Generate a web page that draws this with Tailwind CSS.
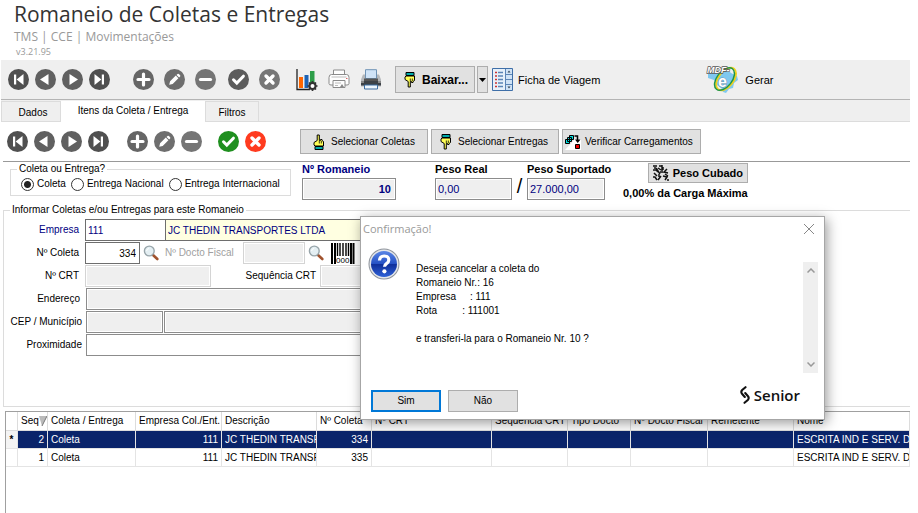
<!DOCTYPE html>
<html lang="pt-BR">
<head>
  <meta charset="UTF-8" />
  <meta name="viewport" content="width=device-width, initial-scale=1.0" />
  <title>Romaneio de Coletas e Entregas</title>
  <script src="https://cdn.jsdelivr.net/npm/@tailwindcss/browser@4"></script>
</head>
<body class="relative min-h-screen flex flex-col overflow-hidden bg-white pr-2 text-[10px] leading-[14px] text-black font-['Liberation_Sans',Arial,sans-serif]">

  <!-- Icon sprites -->
  <svg class="hidden" aria-hidden="true">
    <symbol id="i-first" viewBox="0 0 21 21"><circle cx="10.5" cy="10.5" r="10.5" fill="#505050"/><path d="M6 5.5h2.2v10H6z" fill="#fff"/><path d="M15.5 5v11L8.6 10.5z" fill="#fff"/></symbol>
    <symbol id="i-prev" viewBox="0 0 21 21"><circle cx="10.5" cy="10.5" r="10.5" fill="#606060"/><path d="M13.5 5v11L5 10.5z" fill="#fff"/></symbol>
    <symbol id="i-next" viewBox="0 0 21 21"><circle cx="10.5" cy="10.5" r="10.5" fill="#606060"/><path d="M7.5 5v11l8.5-5.5z" fill="#fff"/></symbol>
    <symbol id="i-last" viewBox="0 0 21 21"><circle cx="10.5" cy="10.5" r="10.5" fill="#505050"/><path d="M12.8 5.5H15v10h-2.2z" fill="#fff"/><path d="M5.5 5v11l6.9-5.5z" fill="#fff"/></symbol>
    <symbol id="i-plus" viewBox="0 0 21 21"><circle cx="10.5" cy="10.5" r="10.5" fill="#666"/><path d="M10.5 5v11M5 10.5h11" stroke="#fff" stroke-width="3.2" stroke-linecap="round"/></symbol>
    <symbol id="i-edit" viewBox="0 0 21 21"><circle cx="10.5" cy="10.5" r="10.5" fill="#6e6e6e"/><path d="M5.2 15.8l.9-3.5 5.7-5.7 2.6 2.6-5.7 5.7zM12.5 5.9l1-1q.7-.5 1.4.1l1.2 1.2q.6.7 0 1.4l-1 1z" fill="#fff"/></symbol>
    <symbol id="i-minus" viewBox="0 0 21 21"><circle cx="10.5" cy="10.5" r="10.5" fill="#757575"/><path d="M5.5 10.5h10" stroke="#fff" stroke-width="3.2" stroke-linecap="round"/></symbol>
    <symbol id="i-check" viewBox="0 0 21 21"><circle cx="10.5" cy="10.5" r="10.5"/><path d="M5.5 10.8l3.3 3.3 6.6-6.9" stroke="#fff" stroke-width="3" fill="none" stroke-linecap="round"/></symbol>
    <symbol id="i-cancel" viewBox="0 0 21 21"><circle cx="10.5" cy="10.5" r="10.5"/><path d="M7 7l7 7M14 7l-7 7" stroke="#fff" stroke-width="3.4" stroke-linecap="round"/></symbol>
    <symbol id="i-hand-down" viewBox="0 0 12 16"><path d="M2 .5h8v3H2z" fill="#0aa" stroke="#000"/><path d="M2 4h8.5v4.5l-1.5 1v1H7.5v-1H6.3V15H4.2V9.5L1 7.5V5z" fill="#ff5" stroke="#000"/><path d="M6.3 9V6.5M8.3 9V6.5" stroke="#000" stroke-width=".8"/></symbol>
    <symbol id="i-hand-up" viewBox="0 0 12 16"><path d="M2 12.5h8v3H2z" fill="#0aa" stroke="#000"/><path d="M2 12h8.5V7.5L9 6.5v-1H7.5v1H6.3V1H4.2v5.5L1 8.5V11z" fill="#ff5" stroke="#000"/><path d="M6.3 7v2.5M8.3 7v2.5" stroke="#000" stroke-width=".8"/></symbol>
    <symbol id="i-search" viewBox="0 0 16 16"><path d="M10 10l4.3 4" stroke="#a0522d" stroke-width="2.6" stroke-linecap="round"/><circle cx="6.3" cy="6" r="4.9" fill="#e4eff3" stroke="#98a5aa" stroke-width="1.4"/><path d="M3.6 6a3 3 0 0 1 2.6-2.6" stroke="#fff" fill="none"/></symbol>
  </svg>

  <!-- Title -->
  <header class="pl-3.5 pb-0.5 font-['Open_Sans',sans-serif]">
    <h1 class="text-[21px] leading-[28px] text-[#333]">Romaneio de Coletas e Entregas</h1>
    <p class="text-xs leading-[18px] text-[#999]">TMS | CCE | Movimentações</p>
    <p class="pl-0.5 text-[9px] leading-[12px] text-[#999]">v3.21.95</p>
  </header>

  <!-- Main toolbar -->
  <div class="ml-px flex items-center border-b border-[#b4b4b4] bg-[#efefef] py-1.5 pl-[7px] text-[11px]">
    <div class="flex gap-1.5">
      <button type="button" aria-label="Primeiro"><svg class="size-[21px]"><use href="#i-first"/></svg></button>
      <button type="button" aria-label="Anterior"><svg class="size-[21px]"><use href="#i-prev"/></svg></button>
      <button type="button" aria-label="Próximo"><svg class="size-[21px]"><use href="#i-next"/></svg></button>
      <button type="button" aria-label="Último"><svg class="size-[21px]"><use href="#i-last"/></svg></button>
    </div>
    <div class="ml-[23px] flex gap-2.5">
      <button type="button" aria-label="Inserir"><svg class="size-[21px]"><use href="#i-plus"/></svg></button>
      <button type="button" aria-label="Editar"><svg class="size-[21px]"><use href="#i-edit"/></svg></button>
      <button type="button" aria-label="Excluir"><svg class="size-[21px]"><use href="#i-minus"/></svg></button>
    </div>
    <div class="ml-3 flex gap-2.5">
      <button type="button" aria-label="Confirmar"><svg class="size-[21px] fill-[#5c5c5c]"><use href="#i-check"/></svg></button>
      <button type="button" aria-label="Cancelar"><svg class="size-[21px] fill-[#777]"><use href="#i-cancel"/></svg></button>
    </div>
    <div class="ml-4 flex gap-2.5">
      <button type="button" aria-label="Gráfico">
        <svg class="size-[22px]" viewBox="0 0 22 22"><path d="M1 0v20.5h13" fill="none" stroke="#222" stroke-width="1.3"/><path d="M3 8h4v11H3z" fill="#f60"/><path d="M8.500 6h4v13h-4z" fill="#1e63b4"/><path d="M14 2h4.500v12H14z" fill="#2e9e49"/><circle cx="16.500" cy="17" r="3" fill="#fff" stroke="#333" stroke-width="2"/><path d="M16.500 12v2M16.500 20v2M11.500 17h2M19.500 17h2M13 13.500l1.400 1.400M18.600 19.100l1.400 1.400M20 13.500l-1.400 1.400M14.400 19.100L13 20.500" stroke="#333" stroke-width="1.700"/></svg>
      </button>
      <button type="button" aria-label="Visualizar impressão">
        <svg class="size-[22px]" viewBox="0 0 22 22" fill="#fdfdfd" stroke="#8a8a8a" stroke-width="1"><path d="M5.500 5.500V1h11v4.500"/><path d="M3.500 5.500h15q2.500 0 2.500 3v6q0 1.500-2 1.500H3q-2 0-2-1.500v-6q0-3 2.500-3z"/><path d="M5 11.500h12v7H5z"/><path d="M3.500 8h15" stroke="#bbb"/><path d="M7 14h6M7 16.500h3" stroke="#bbb"/><path d="M12 18l2-3 2 3z" fill="#888" stroke="none"/><path d="M18 9.500h1.500" stroke="#d66"/></svg>
      </button>
      <button type="button" aria-label="Imprimir">
        <svg class="size-[22px]" viewBox="0 0 22 22"><path d="M3 5.500h16l2 5v7H1v-7z" fill="#b5b8bb"/><path d="M5.500.700h11V9.500h-11z" fill="#cfe3f7" stroke="#6f93b5"/><path d="M4 9.500h14v2.500H4z" fill="#555"/><path d="M1 12h20v4.500H1z" fill="#3d4247"/><path d="M1 12h3v2H1zM18 12h3v2h-3z" fill="#888"/><path d="M4.500 16h13v4h-13z" fill="#eef6fd" stroke="#3c6da0"/></svg>
      </button>
    </div>
    <div class="ml-[13px] flex gap-0.5">
      <button type="button" class="flex h-[27px] w-20 items-center gap-1.5 border border-[#adadad] bg-[#e1e1e1] pl-2 text-xs font-bold">
        <svg class="h-4 w-3"><use href="#i-hand-down"/></svg>Baixar...
      </button>
      <button type="button" aria-label="Mais opções de baixa" class="flex h-[27px] w-[11px] items-center justify-center border border-[#adadad] bg-[#e1e1e1]">
        <svg class="h-1 w-[7px]" viewBox="0 0 7 4"><path d="M0 0h7L3.500 4z"/></svg>
      </button>
    </div>
    <button type="button" class="ml-1 flex items-center gap-[5px]">
      <svg class="h-[23px] w-[21px]" viewBox="0 0 21 23"><path d="M.5.5h20v22H.5z" fill="#cfe2f5" stroke="#3f6fa8"/><path d="M1 1h12v21H1z" fill="#e6f0fa"/><path d="M3 4.500h2M3 8h2M3 11.500h2M3 15h2M3 18.500h2" stroke="#c33" stroke-width="1.400"/><path d="M6 4.500h5M6 8h5M6 11.500h5M6 15h5M6 18.500h5" stroke="#5b84b5" stroke-width="1.400"/><path d="M13.500 1v21M13.500 6.500H20M13.500 16.500H20M13.500 11.500H20" stroke="#5b84b5"/><path d="M15.500 4.500L17 2.500l1.500 2zM15.500 18.500l1.500 2 1.500-2z" fill="#345"/></svg>
      Ficha de Viagem
    </button>
    <button type="button" class="ml-[106px] flex items-center gap-1.5">
      <svg class="h-[27px] w-[33px]" viewBox="0 0 33 27"><path d="M2 8l4-2 6 1 4-4 6 1 3 3 6 3 1 4-4 3-1 5-4 1-3 4-3-1-1-3-5-4-3-5-6-2z" fill="#7fc8ef"/><ellipse cx="20" cy="13" rx="7.500" ry="13" transform="rotate(38 20 13)" fill="none" stroke="#f1d21c" stroke-width="2"/><ellipse cx="18.500" cy="13" rx="7.500" ry="13" transform="rotate(38 18.500 13)" fill="none" stroke="#20964a" stroke-width="1.500"/><text x="12" y="21" font-family="Liberation Sans" font-size="16" font-weight="bold" fill="#fff" stroke="#6d95ad" stroke-width="1" paint-order="stroke">e</text><text x="1" y="7" font-family="Liberation Sans" font-size="9" font-style="italic" font-weight="bold" fill="#fff" stroke="#555" stroke-width="1.400" paint-order="stroke">MDF-</text></svg>
      Gerar
    </button>
  </div>

  <!-- Tabs -->
  <nav class="ml-px flex items-end border-b border-[#dcdcdc] bg-[#efefef] pt-px">
    <a href="#" class="w-[60px] border border-b-0 border-[#dcdcdc] pt-1 pb-px pl-1 text-center">Dados</a>
    <a href="#" class="-mb-px w-[144px] bg-white pt-[3px] pb-1 text-center">Itens da Coleta / Entrega</a>
    <a href="#" class="w-[54px] border border-b-0 border-[#dcdcdc] pt-1 pb-px text-center">Filtros</a>
  </nav>

  <!-- Items toolbar -->
  <div class="ml-[3px] flex items-center border-b border-[#999] py-[7px] pl-1">
    <div class="flex gap-1.5">
      <button type="button" aria-label="Primeiro item"><svg class="size-[21px]"><use href="#i-first"/></svg></button>
      <button type="button" aria-label="Item anterior"><svg class="size-[21px]"><use href="#i-prev"/></svg></button>
      <button type="button" aria-label="Próximo item"><svg class="size-[21px]"><use href="#i-next"/></svg></button>
      <button type="button" aria-label="Último item"><svg class="size-[21px]"><use href="#i-last"/></svg></button>
    </div>
    <div class="ml-[18px] flex gap-1.5">
      <button type="button" aria-label="Inserir item"><svg class="size-[21px]"><use href="#i-plus"/></svg></button>
      <button type="button" aria-label="Editar item"><svg class="size-[21px]"><use href="#i-edit"/></svg></button>
      <button type="button" aria-label="Excluir item"><svg class="size-[21px]"><use href="#i-minus"/></svg></button>
    </div>
    <div class="ml-4 flex gap-1.5">
      <button type="button" aria-label="Confirmar item"><svg class="size-[21px] fill-[#1f8f1f]"><use href="#i-check"/></svg></button>
      <button type="button" aria-label="Cancelar item"><svg class="size-[21px] fill-[#ff3b1f]"><use href="#i-cancel"/></svg></button>
    </div>
    <div class="ml-[34px] flex gap-[3px]">
      <button type="button" class="flex h-[25px] w-32 items-center gap-1.5 border border-[#adadad] bg-[#e1e1e1] pl-3">
        <svg class="h-4 w-3"><use href="#i-hand-up"/></svg>Selecionar Coletas
      </button>
      <button type="button" class="flex h-[25px] w-32 items-center gap-1.5 border border-[#adadad] bg-[#e1e1e1] pl-2">
        <svg class="h-4 w-3"><use href="#i-hand-down"/></svg>Selecionar Entregas
      </button>
      <button type="button" class="flex h-[25px] w-[139px] items-center gap-1 border border-[#adadad] bg-[#e1e1e1] pl-0.5">
        <svg class="size-4 shrink-0" viewBox="0 0 16 16"><path d="M0 16L10 5h6v11z" fill="#fff"/><g fill="#0dd" stroke="#000"><path d="M4.500 1.500h4v4h-4zM2.500 3.500h4v4h-4zM.5 5.500h4v4h-4z"/></g><path d="M9.500 2h3v5" fill="none" stroke="#000" stroke-width="1.500"/><path d="M10 5.500h5.500L12.700 9z"/><path d="M10.500 10.500h4v4h-4z" fill="#e00" stroke="#000"/></svg>
        <span class="whitespace-nowrap">Verificar Carregamentos</span>
      </button>
    </div>
  </div>

  <!-- Summary -->
  <section class="flex items-start pb-[3px] pl-2.5">
    <fieldset class="w-[281px] min-w-0 shrink-0 border border-[#dcdcdc] px-2.5 pb-[3px]">
      <legend class="-ml-1 px-0.5">Coleta ou Entrega?</legend>
      <div class="flex gap-[5px] py-px whitespace-nowrap">
        <label class="flex items-center gap-[3px]"><input type="radio" name="tipo" checked class="size-[13px] appearance-none rounded-full border border-[#333] checked:bg-[radial-gradient(circle,#222_3px,#fff_4px)]">Coleta</label>
        <label class="flex items-center gap-[3px]"><input type="radio" name="tipo" class="size-[13px] appearance-none rounded-full border border-[#333] bg-white">Entrega Nacional</label>
        <label class="flex items-center gap-[3px]"><input type="radio" name="tipo" class="size-[13px] appearance-none rounded-full border border-[#333] bg-white">Entrega Internacional</label>
      </div>
    </fieldset>
    <div class="ml-[11px] flex w-[94px] flex-col gap-0.5 text-[11px]">
      <label for="romaneio" class="font-bold text-[#00007f]">Nº Romaneio</label>
      <input id="romaneio" type="text" value="10" readonly class="h-[22px] w-full border border-[#8c8c8c] bg-[#efefef] px-1 text-right font-bold text-[#00007f] inset-ring inset-ring-white">
    </div>
    <div class="ml-[39px] flex w-[77px] flex-col gap-0.5 text-[11px]">
      <label for="pesoReal" class="font-bold">Peso Real</label>
      <input id="pesoReal" type="text" value="0,00" readonly class="h-[22px] w-full border border-[#8c8c8c] bg-[#efefef] px-0.5 text-[#00007f] inset-ring inset-ring-white">
    </div>
    <span class="w-[15px] self-end pb-1 text-center text-xl leading-[20px]">/</span>
    <div class="flex w-[78px] flex-col gap-0.5 text-[11px]">
      <label for="pesoSuportado" class="font-bold whitespace-nowrap">Peso Suportado</label>
      <input id="pesoSuportado" type="text" value="27.000,00" readonly class="h-[22px] w-full border border-[#8c8c8c] bg-[#efefef] px-0.5 text-[#00007f] inset-ring inset-ring-white">
    </div>
    <div class="ml-[18px] flex flex-col items-end gap-[3px] pt-px text-[11px]">
      <button type="button" class="flex h-5 w-[100px] items-center gap-1 border border-[#adadad] bg-[#e1e1e1] pl-1 font-bold">
        <svg class="size-4" viewBox="0 0 16 16" fill="none" stroke="#111" stroke-width="1.500"><path d="M0 1h4M6 1h3M1 3h2M5 3l3 2M10 2v3M0 5h3l2 2M7 7h3M1 8l3 3M6 9v3M0 12h2l2 3M8 11l-3 4M14 4l-3 3 4 1M12 9l3 2M10 11l4 1-2 3M15 14v2M9 0v6M3 3l4 6"/></svg>
        <span class="whitespace-nowrap">Peso Cubado</span>
      </button>
      <p class="font-bold whitespace-nowrap">0,00% da Carga Máxima</p>
    </div>
  </section>

  <!-- Form -->
  <fieldset class="ml-[3px] min-h-[204px] border border-r-0 border-[#dcdcdc] pt-0.5 pr-4">
    <legend class="ml-1.5 px-0.5">Informar Coletas e/ou Entregas para este Romaneio</legend>
    <div class="flex flex-col gap-px whitespace-nowrap">
      <div class="flex items-center">
        <label for="empresa" class="w-[81px] pr-1.5 text-right text-[#00007f]">Empresa</label>
        <input id="empresa" type="text" value="111" class="h-[22px] w-[81px] border border-[#6e6e6e] px-0.5 text-[#00007f]">
        <input aria-label="Nome da empresa" type="text" value="JC THEDIN TRANSPORTES LTDA" readonly class="-ml-px h-[22px] w-[440px] border border-[#6e6e6e] bg-[#ffffe1] px-0.5 text-[#00007f]">
      </div>
      <div class="flex items-center">
        <label for="coleta" class="w-[81px] pr-1.5 text-right">Nº Coleta</label>
        <input id="coleta" type="text" value="334" class="h-[22px] w-[55px] border border-[#6e6e6e] px-[3px] text-right">
        <button type="button" aria-label="Pesquisar coleta" class="ml-[3px]"><svg class="size-4"><use href="#i-search"/></svg></button>
        <label for="docto" class="w-[84px] pl-1.5 text-[#a0a0a0]">Nº Docto Fiscal</label>
        <input id="docto" type="text" disabled class="h-[22px] w-[62px] border border-[#d4d4d4] bg-[#efefef] inset-ring inset-ring-white">
        <button type="button" aria-label="Pesquisar documento" class="ml-[3px]"><svg class="size-4"><use href="#i-search"/></svg></button>
        <button type="button" aria-label="Código de barras" class="ml-[7px]">
          <svg class="h-[21px] w-6" viewBox="0 0 24 21"><path d="M0 0h24v21H0z" fill="#fff"/><path d="M1 0v21M22.500 0v21M4 0v21M20 0v21" stroke="#000" stroke-width="2"/><path d="M6.500 0v13M9 0v13M12 0v13M15 0v13M17.500 0v13" stroke="#000" stroke-width="1.400"/><text x="5" y="20" font-family="Liberation Sans" font-size="8">000</text></svg>
        </button>
      </div>
      <div class="flex items-center">
        <label for="crt" class="w-[81px] pr-1.5 text-right">Nº CRT</label>
        <input id="crt" type="text" disabled class="h-[22px] w-[126px] border border-[#d4d4d4] bg-[#efefef] inset-ring inset-ring-white">
        <label for="seqCrt" class="w-[109px] pr-1 text-right">Sequência CRT</label>
        <input id="seqCrt" type="text" disabled class="h-[22px] w-[126px] border border-[#d4d4d4] bg-[#efefef] inset-ring inset-ring-white">
      </div>
      <div class="flex items-center">
        <label for="endereco" class="w-[82px] pr-1.5 text-right">Endereço</label>
        <input id="endereco" type="text" readonly class="h-[22px] w-[520px] border border-[#8c8c8c] bg-[#efefef] inset-ring inset-ring-white">
      </div>
      <div class="flex items-center">
        <label for="cep" class="w-[82px] pr-1 text-right">CEP / Município</label>
        <input id="cep" type="text" readonly class="h-[22px] w-[77px] border border-[#8c8c8c] bg-[#efefef] inset-ring inset-ring-white">
        <input aria-label="Município" type="text" readonly class="ml-px h-[22px] w-[442px] border border-[#8c8c8c] bg-[#efefef] inset-ring inset-ring-white">
      </div>
      <div class="flex items-center">
        <label for="proximidade" class="w-[82px] pr-1 text-right">Proximidade</label>
        <input id="proximidade" type="text" class="h-[22px] w-[520px] border border-[#8c8c8c] bg-white">
      </div>
    </div>
  </fieldset>

  <!-- Grid -->
  <div class="mt-1 ml-[5px] flex-1 overflow-hidden border-t border-l border-[#a0a0a0]">
    <table class="w-full table-fixed border-separate border-spacing-0 whitespace-nowrap [&_td]:overflow-hidden [&_td]:border-r [&_td]:border-b [&_td]:border-[#e4e4e4] [&_td]:px-[3px] [&_th]:overflow-hidden [&_th]:border-r [&_th]:border-b [&_th]:border-[#dcdcdc] [&_th]:pl-[3px] [&_th]:text-left [&_th]:font-normal">
      <colgroup>
        <col class="w-3"><col class="w-[30px]"><col class="w-[88px]"><col class="w-[86px]"><col class="w-[95px]"><col class="w-[55px]"><col class="w-[120px]"><col class="w-[76px]"><col class="w-[63px]"><col class="w-[77px]"><col class="w-[86px]"><col>
      </colgroup>
      <thead>
        <tr class="h-[19px]">
          <th></th>
          <th><span class="flex items-center">Seq<svg class="h-2.5 w-2 shrink-0" viewBox="0 0 8 10"><path d="M0 0h8L3 10z" fill="#bbb"/><path d="M8 0L3 10" stroke="#777"/></svg></span></th>
          <th>Coleta / Entrega</th>
          <th>Empresa Col./Ent.</th>
          <th>Descrição</th>
          <th>Nº Coleta</th>
          <th>Nº CRT</th>
          <th>Sequência CRT</th>
          <th>Tipo Docto</th>
          <th>Nº Docto Fiscal</th>
          <th>Remetente</th>
          <th>Nome</th>
        </tr>
      </thead>
      <tbody>
        <tr class="h-[18px] bg-[#0a246a] text-white">
          <td class="bg-[#f4f4f4] text-center font-bold text-black">*</td>
          <td class="text-right">2</td>
          <td>Coleta</td>
          <td class="text-right">111</td>
          <td>JC THEDIN TRANSPO</td>
          <td class="text-right">334</td>
          <td></td><td></td><td></td><td></td><td></td>
          <td>ESCRITA IND E SERV. DE</td>
        </tr>
        <tr class="h-[18px]">
          <td></td>
          <td class="text-right">1</td>
          <td>Coleta</td>
          <td class="text-right">111</td>
          <td>JC THEDIN TRANSPO</td>
          <td class="text-right">335</td>
          <td></td><td></td><td></td><td></td><td></td>
          <td>ESCRITA IND E SERV. DE</td>
        </tr>
      </tbody>
    </table>
  </div>

  <!-- Confirmation dialog -->
  <div role="dialog" aria-labelledby="dlgTitle" class="absolute top-[216px] left-[360px] flex w-[465px] flex-col border border-[#a6a6a6] bg-white shadow-[2px_3px_12px_rgba(0,0,0,0.4)]">
    <div class="flex items-center justify-between pt-1 pr-2.5 pl-0.5">
      <h2 id="dlgTitle" class="font-['Open_Sans',sans-serif] text-[11px] leading-[16px] text-[#999]">Confirmação!</h2>
      <button type="button" aria-label="Fechar"><svg class="size-2.5" viewBox="0 0 10 10"><path d="M0 0l10 10M10 0L0 10" stroke="#888"/></svg></button>
    </div>
    <div class="flex items-start pt-[11px] pr-1.5 pl-[7px]">
      <svg class="size-8" viewBox="0 0 32 32"><defs><linearGradient id="g" x1="0" y1="0" x2="0" y2="1"><stop offset="0" stop-color="#5a86e6"/><stop offset=".5" stop-color="#2450c4"/><stop offset=".52" stop-color="#0f2f9a"/><stop offset="1" stop-color="#2f62d8"/></linearGradient></defs><circle cx="16" cy="16" r="15.500" fill="#8f949c"/><circle cx="16" cy="16" r="14.500" fill="#e3e6ea"/><circle cx="16" cy="16" r="13" fill="url(#g)"/><path d="M11.500 12.500Q11.700 8 16.200 8q4.600 0 4.600 4 0 2.200-2.300 3.600-2 1.300-2 3.200" fill="none" stroke="#fff" stroke-width="3.200"/><circle cx="16.400" cy="23.300" r="2.100" fill="#fff"/></svg>
      <p class="flex-1 pt-3.5 pl-4 whitespace-pre">Deseja cancelar a coleta do
Romaneio Nr.: 16
Empresa     : 111
Rota         : 111001

e transferi-la para o Romaneio Nr. 10 ?</p>
      <div class="mt-3.5 flex h-[111px] w-[15px] flex-col items-center justify-between bg-[#efefef] py-1.5">
        <svg class="h-[5px] w-2" viewBox="0 0 8 5"><path d="M.5 4.500L4 1l3.500 3.500" fill="none" stroke="#999" stroke-width="1.500"/></svg>
        <svg class="h-[5px] w-2" viewBox="0 0 8 5"><path d="M.5.5L4 4 7.500.5" fill="none" stroke="#999" stroke-width="1.500"/></svg>
      </div>
    </div>
    <div class="flex items-start gap-[7px] pt-[17px] pr-6 pb-[7px] pl-2.5">
      <button type="button" class="h-[22px] w-[70px] border-2 border-[#0078d7] bg-[#e1e1e1]">Sim</button>
      <button type="button" class="h-[22px] w-[70px] border border-[#adadad] bg-[#e1e1e1]">Não</button>
      <div class="-mt-1 ml-auto flex items-center gap-1">
        <svg class="h-[18px] w-2.5" viewBox="0 0 10 18" fill="none" stroke="#111" stroke-width="2.100" stroke-linecap="round"><path d="M5.500 1.200L2.200 4Q.4 6 2.200 8l2.600 3"/><path d="M4.500 16.800L7.800 14q1.800-2 0-4L5.200 7"/></svg>
        <span class="font-['Open_Sans',sans-serif] text-[15px] leading-[18px] font-semibold text-[#111]">Senior</span>
      </div>
    </div>
  </div>
</body>
</html>
